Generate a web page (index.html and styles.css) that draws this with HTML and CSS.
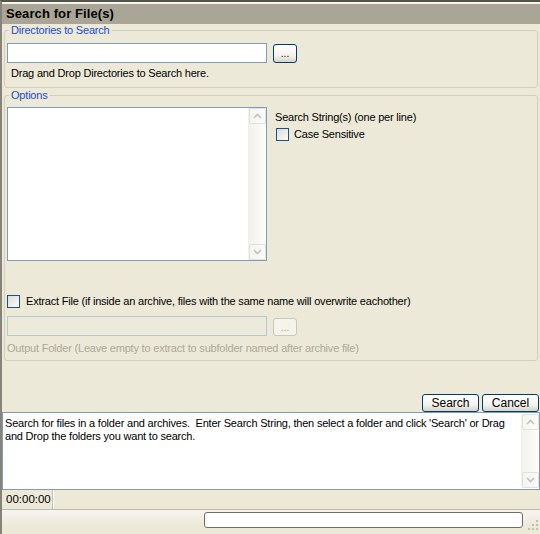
FILE: index.html
```html
<!DOCTYPE html>
<html>
<head>
<meta charset="utf-8">
<link rel="stylesheet" href="styles.css">
</head>
<body>
<div class="window">
  <div class="title">Search for File(s)</div>

  <fieldset class="group dirs">
    <legend>Directories to Search</legend>
    <div class="row">
      <div class="input"></div>
      <div class="btn browse">...</div>
    </div>
    <div class="hint">Drag and Drop Directories to Search here.</div>
  </fieldset>

  <fieldset class="group options">
    <legend>Options</legend>
    <div class="opt-top">
      <div class="listbox">
        <div class="vscroll">
          <div class="arrow"><svg width="9" height="6" viewBox="0 0 9 6"><path d="M1 5 L4.5 1.5 L8 5" fill="none" stroke="#c3c3bb" stroke-width="1.6"/></svg></div>
          <div class="track"></div>
          <div class="arrow"><svg width="9" height="6" viewBox="0 0 9 6"><path d="M1 1 L4.5 4.5 L8 1" fill="none" stroke="#c3c3bb" stroke-width="1.6"/></svg></div>
        </div>
      </div>
      <div class="side">
        <div class="label">Search String(s) (one per line)</div>
        <div class="check case"><span class="box"></span><span>Case Sensitive</span></div>
      </div>
    </div>
    <div class="check extract"><span class="box"></span><span>Extract File (if inside an archive, files with the same name will overwrite eachother)</span></div>
    <div class="row out-row">
      <div class="input disabled"></div>
      <div class="btn browse disabled">...</div>
    </div>
    <div class="hint muted">Output Folder (Leave empty to extract to subfolder named after archive file)</div>
  </fieldset>

  <div class="spacer"></div>

  <div class="actions">
    <div class="btn action">Search</div>
    <div class="btn action">Cancel</div>
  </div>

  <div class="log">
    <div class="log-text">Search for files in a folder and archives.  Enter Search String, then select a folder and click 'Search' or Drag
and Drop the folders you want to search.</div>
    <div class="vscroll">
      <div class="arrow"><svg width="9" height="6" viewBox="0 0 9 6"><path d="M1 5 L4.5 1.5 L8 5" fill="none" stroke="#c3c3bb" stroke-width="1.6"/></svg></div>
      <div class="track"></div>
      <div class="arrow"><svg width="9" height="6" viewBox="0 0 9 6"><path d="M1 1 L4.5 4.5 L8 1" fill="none" stroke="#c3c3bb" stroke-width="1.6"/></svg></div>
    </div>
  </div>

  <div class="status">
    <div class="cell time">00:00:00</div>
    <div class="cell rest"></div>
  </div>

  <div class="footer">
    <div class="progress"></div>
    <svg class="grip" width="11" height="11" viewBox="0 0 11 11">
      <rect x="8" y="0" width="2" height="2" fill="#c1bfb2"/>
      <rect x="4" y="4" width="2" height="2" fill="#c1bfb2"/>
      <rect x="8" y="4" width="2" height="2" fill="#c1bfb2"/>
      <rect x="0" y="8" width="2" height="2" fill="#c1bfb2"/>
      <rect x="4" y="8" width="2" height="2" fill="#c1bfb2"/>
      <rect x="8" y="8" width="2" height="2" fill="#c1bfb2"/>
    </svg>
  </div>
</div>
</body>
</html>
```

FILE: styles.css
```css
html, body {
  margin: 0;
  padding: 0;
  background: #ece9d8;
}

body {
  font-family: "Liberation Sans", Arial, sans-serif;
  font-size: 11px;
  line-height: 13px;
  letter-spacing: -0.2px;
  color: #000;
}

.window {
  width: 540px;
  height: 534px;
  box-sizing: border-box;
  border-top: 2px solid #55544b;
  border-left: 2px solid #86847a;
  background: #ece9d8;
  display: flex;
  flex-direction: column;
  overflow: hidden;
}

.title {
  height: 20px;
  border-top: 2px solid #f4f3ec;
  background: #a9a697;
  font-weight: bold;
  font-size: 13px;
  letter-spacing: 0.1px;
  line-height: 20px;
  padding-left: 4px;
  color: #000;
  flex: none;
}

.group {
  margin: 0 2px 0 2px;
  padding: 6px 2px 7px 2px;
  border: 1px solid #d0d0bf;
  border-radius: 3px;
  min-width: 0;
  flex: none;
}

.group legend {
  padding: 0 2px;
  margin-left: 2px;
  color: #1d4fc9;
  line-height: 13px;
}

.row {
  display: flex;
  gap: 6px;
  align-items: flex-start;
}

.input {
  width: 260px;
  height: 20px;
  box-sizing: border-box;
  border: 1px solid #7f9db9;
  background: #fff;
}

.input.disabled {
  background: #ebeadb;
  border-color: #b9c7d3;
}

.btn {
  box-sizing: border-box;
  border: 1px solid #003c74;
  border-radius: 3px;
  background: linear-gradient(#ffffff, #f4f3ee 60%, #d8d4c8);
  text-align: center;
  color: #000;
  letter-spacing: 0;
}

.btn.browse {
  width: 24px;
  height: 19px;
  margin-top: 1px;
  line-height: 17px;
  font-size: 10px;
}

.btn.disabled {
  border-color: #c9c7ba;
  background: #f5f4ea;
  color: #aca899;
  height: 18px;
  margin-top: 2px;
}

.hint {
  margin-top: 4px;
  padding-left: 4px;
}

.options {
  margin-top: 1px;
  padding-top: 5px;
  padding-bottom: 5px;
}

.opt-top {
  display: flex;
  gap: 8px;
}

.listbox {
  width: 260px;
  height: 154px;
  box-sizing: border-box;
  border: 1px solid #7f9db9;
  background: #fff;
  display: flex;
  justify-content: flex-end;
}

.vscroll {
  width: 17px;
  display: flex;
  flex-direction: column;
  background: linear-gradient(90deg, #f3f1ec, #fdfdfa);
  border-left: 1px solid #f0efe9;
}

.vscroll .arrow {
  height: 16px;
  box-sizing: border-box;
  border: 1px solid #e2e1da;
  border-radius: 2px;
  background: linear-gradient(90deg, #f5f4ef, #fbfbf8);
  display: flex;
  align-items: center;
  justify-content: center;
}

.vscroll .track {
  flex: 1;
}

.side {
  padding-top: 4px;
}

.check {
  display: flex;
  align-items: center;
  gap: 5px;
}

.check .box {
  width: 13px;
  height: 13px;
  box-sizing: border-box;
  border: 1px solid #1c5180;
  background: linear-gradient(135deg, #dcdcd7, #fbfbf9);
  flex: none;
}

.check.case {
  height: 17px;
  margin-top: 2px;
  padding-left: 1px;
}

.check.extract {
  height: 16px;
  margin-top: 32px;
  gap: 6px;
}

.out-row {
  margin-top: 7px;
}

.hint.muted {
  color: #aca899;
  padding-left: 0;
  margin-top: 6px;
}

.spacer {
  flex: 1;
}

.actions {
  display: flex;
  justify-content: flex-end;
  gap: 3px;
  margin-right: 1px;
  flex: none;
}

.btn.action {
  width: 57px;
  height: 18px;
  line-height: 16px;
  font-size: 12px;
}

.log {
  height: 78px;
  box-sizing: border-box;
  border: 1px solid #7f9db9;
  background: #fff;
  display: flex;
  flex: none;
}

.log-text {
  flex: 1;
  white-space: pre;
  padding: 4px 0 0 2px;
  overflow: hidden;
}

.log .vscroll {
  margin: 1px 0;
}

.status {
  height: 19px;
  flex: none;
  display: flex;
  border-bottom: 1px solid #bdbaa9;
}

.status .cell {
  line-height: 19px;
}

.status .time {
  width: 46px;
  padding-left: 4px;
  border-right: 1px solid #c4c1b0;
  box-shadow: 1px 0 0 #fff;
  font-size: 11.5px;
  letter-spacing: 0;
}

.footer {
  height: 24px;
  flex: none;
  display: flex;
  align-items: flex-start;
  background: linear-gradient(#f6f5ef, #ece9d8 70%);
  padding-left: 202px;
}

.progress {
  width: 319px;
  height: 16px;
  box-sizing: border-box;
  margin-top: 2px;
  border: 1px solid #6f6f6a;
  border-radius: 3px;
  background: #fff;
}

.grip {
  margin: 10px 0 0 5px;
}
```
